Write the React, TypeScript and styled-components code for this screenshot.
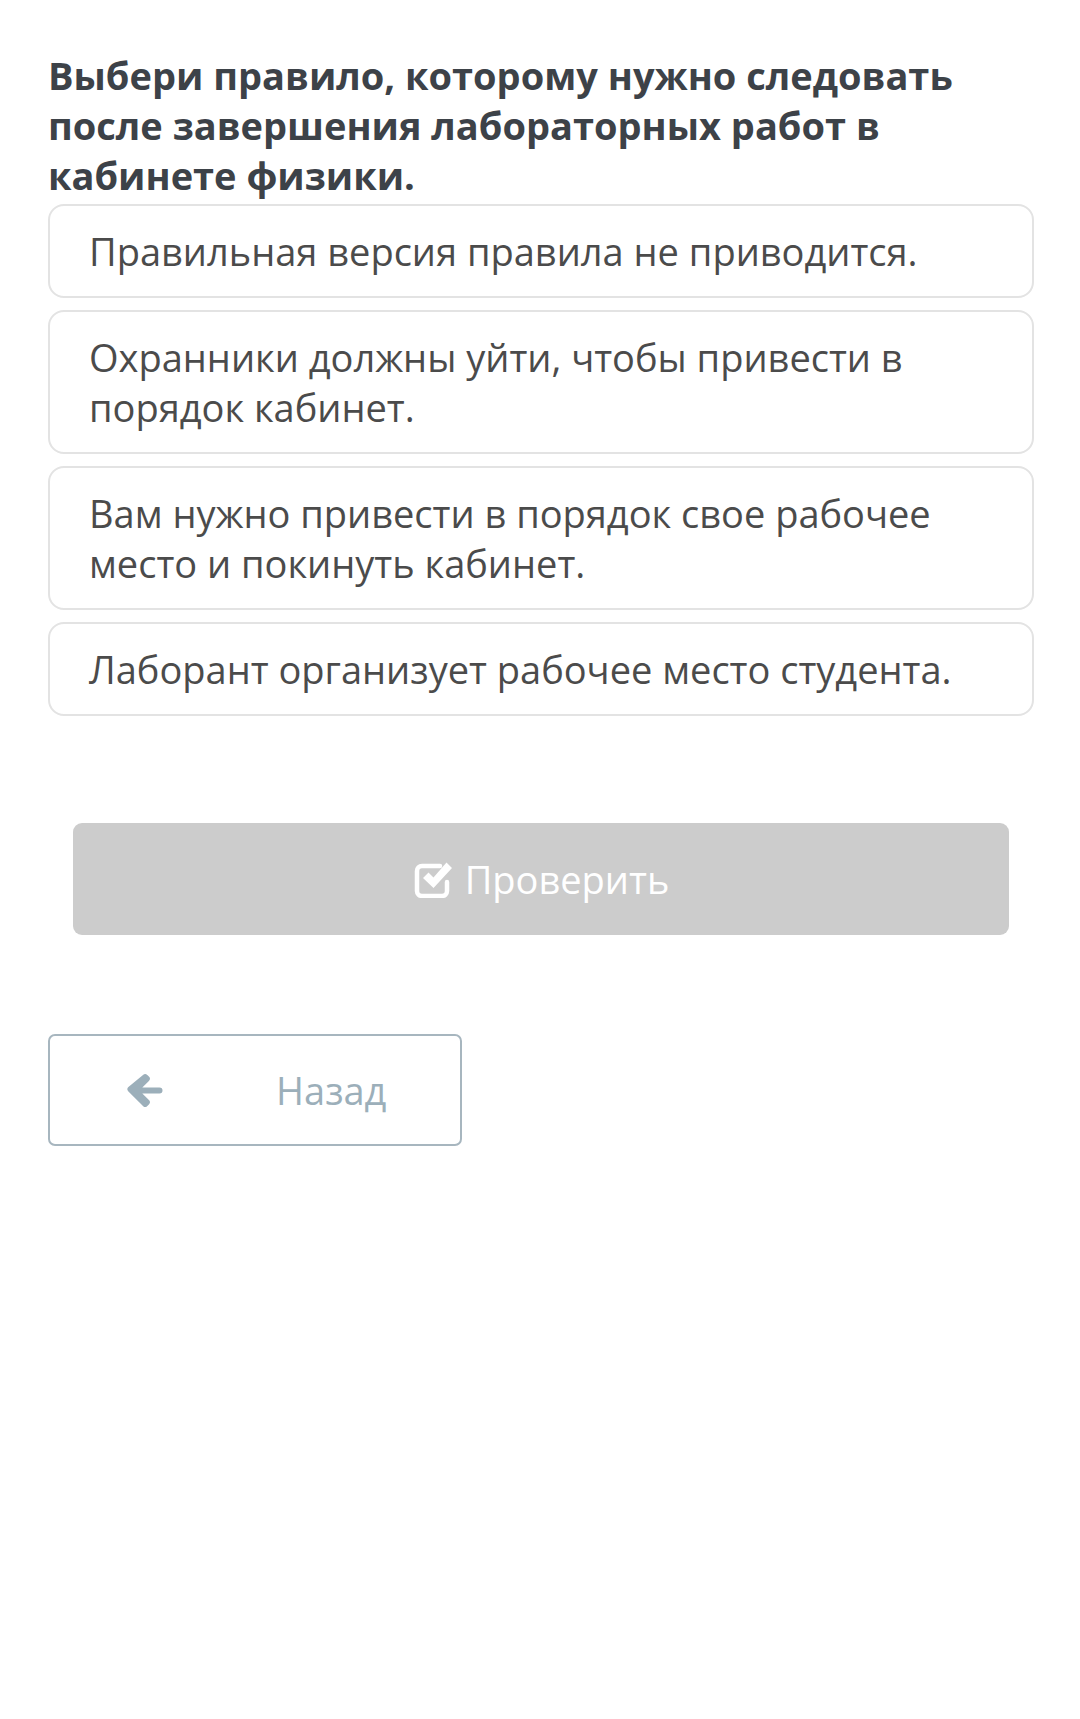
import React from 'react';
import styled, { createGlobalStyle } from 'styled-components';

const GlobalStyle = createGlobalStyle`
  html, body {
    margin: 0;
    padding: 0;
    background: #ffffff;
  }
  body {
    font-family: 'Open Sans', 'Noto Sans', sans-serif;
  }
`;

const Page = styled.div`
  width: 1080px;
  min-height: 1719px;
  box-sizing: border-box;
  padding: 50px 46px 0 48px;
  background: #ffffff;
`;

const Question = styled.h1`
  margin: 0 0 4px;
  font-size: 38px;
  line-height: 50px;
  font-weight: 700;
  color: #3d4248;
`;

const Options = styled.div`
  display: flex;
  flex-direction: column;
  gap: 12px;
`;

const Option = styled.div`
  box-sizing: border-box;
  border: 2px solid #e3e3e3;
  border-radius: 16px;
  padding: 20px 40px 20px 39px;
  font-size: 38px;
  line-height: 50px;
  color: #4b4b4b;
  background: #ffffff;
`;

const CheckRow = styled.div`
  padding: 107px 25px 0;
`;

const CheckButton = styled.button`
  width: 100%;
  height: 112px;
  border: none;
  border-radius: 9px;
  background: #cccccc;
  color: #ffffff;
  font-family: 'Open Sans', 'Noto Sans', sans-serif;
  font-size: 38px;
  display: flex;
  align-items: center;
  justify-content: center;
  gap: 12px;
  padding: 0;
`;

const BackRow = styled.div`
  padding-top: 99px;
`;

const BackButton = styled.button`
  box-sizing: border-box;
  width: 414px;
  height: 112px;
  border: 2px solid #a7b6bf;
  border-radius: 7px;
  background: #ffffff;
  display: grid;
  grid-template-columns: 150px auto;
  align-items: center;
  justify-content: start;
  padding: 0 0 0 76px;
  font-family: 'Open Sans', 'Noto Sans', sans-serif;
  font-size: 38px;
  color: #9cafba;
  text-align: left;
`;

const CheckIcon = () => (
  <svg width="40" height="38" viewBox="0 0 40 38">
    <path
      d="M27 6 H9 a5 5 0 0 0 -5 5 v20 a5 5 0 0 0 5 5 h20 a5 5 0 0 0 5 -5 v-9"
      fill="none"
      stroke="#ffffff"
      strokeWidth="4.5"
      strokeLinecap="round"
    />
    <path d="M10 18 l5.5 -5.5 l5 5 l13 -15 l5.5 5.5 l-18.5 20 z" fill="#ffffff" />
  </svg>
);

const ArrowIcon = () => (
  <svg width="38" height="34" viewBox="0 0 38 34">
    <path
      d="M17 2 a3 3 0 0 1 4.3 0 l1.6 1.6 a3 3 0 0 1 0 4.3 l-6.6 6.6 h17.2 a3 3 0 0 1 3 3 v0 a3 3 0 0 1 -3 3 h-17.2 l6.6 6.6 a3 3 0 0 1 0 4.3 l-1.6 1.6 a3 3 0 0 1 -4.3 0 l-14.6 -14.6 a3 3 0 0 1 0 -4.3 z"
      fill="#9cafba"
    />
  </svg>
);

const options = [
  'Правильная версия правила не приводится.',
  'Охранники должны уйти, чтобы привести в порядок кабинет.',
  'Вам нужно привести в порядок свое рабочее место и покинуть кабинет.',
  'Лаборант организует рабочее место студента.',
];

export default function App() {
  return (
    <>
      <GlobalStyle />
      <Page>
        <Question>
          Выбери правило, которому нужно следовать после завершения лабораторных работ в кабинете физики.
        </Question>
        <Options>
          {options.map((text) => (
            <Option key={text}>{text}</Option>
          ))}
        </Options>
        <CheckRow>
          <CheckButton>
            <CheckIcon />
            Проверить
          </CheckButton>
        </CheckRow>
        <BackRow>
          <BackButton>
            <ArrowIcon />
            Назад
          </BackButton>
        </BackRow>
      </Page>
    </>
  );
}
